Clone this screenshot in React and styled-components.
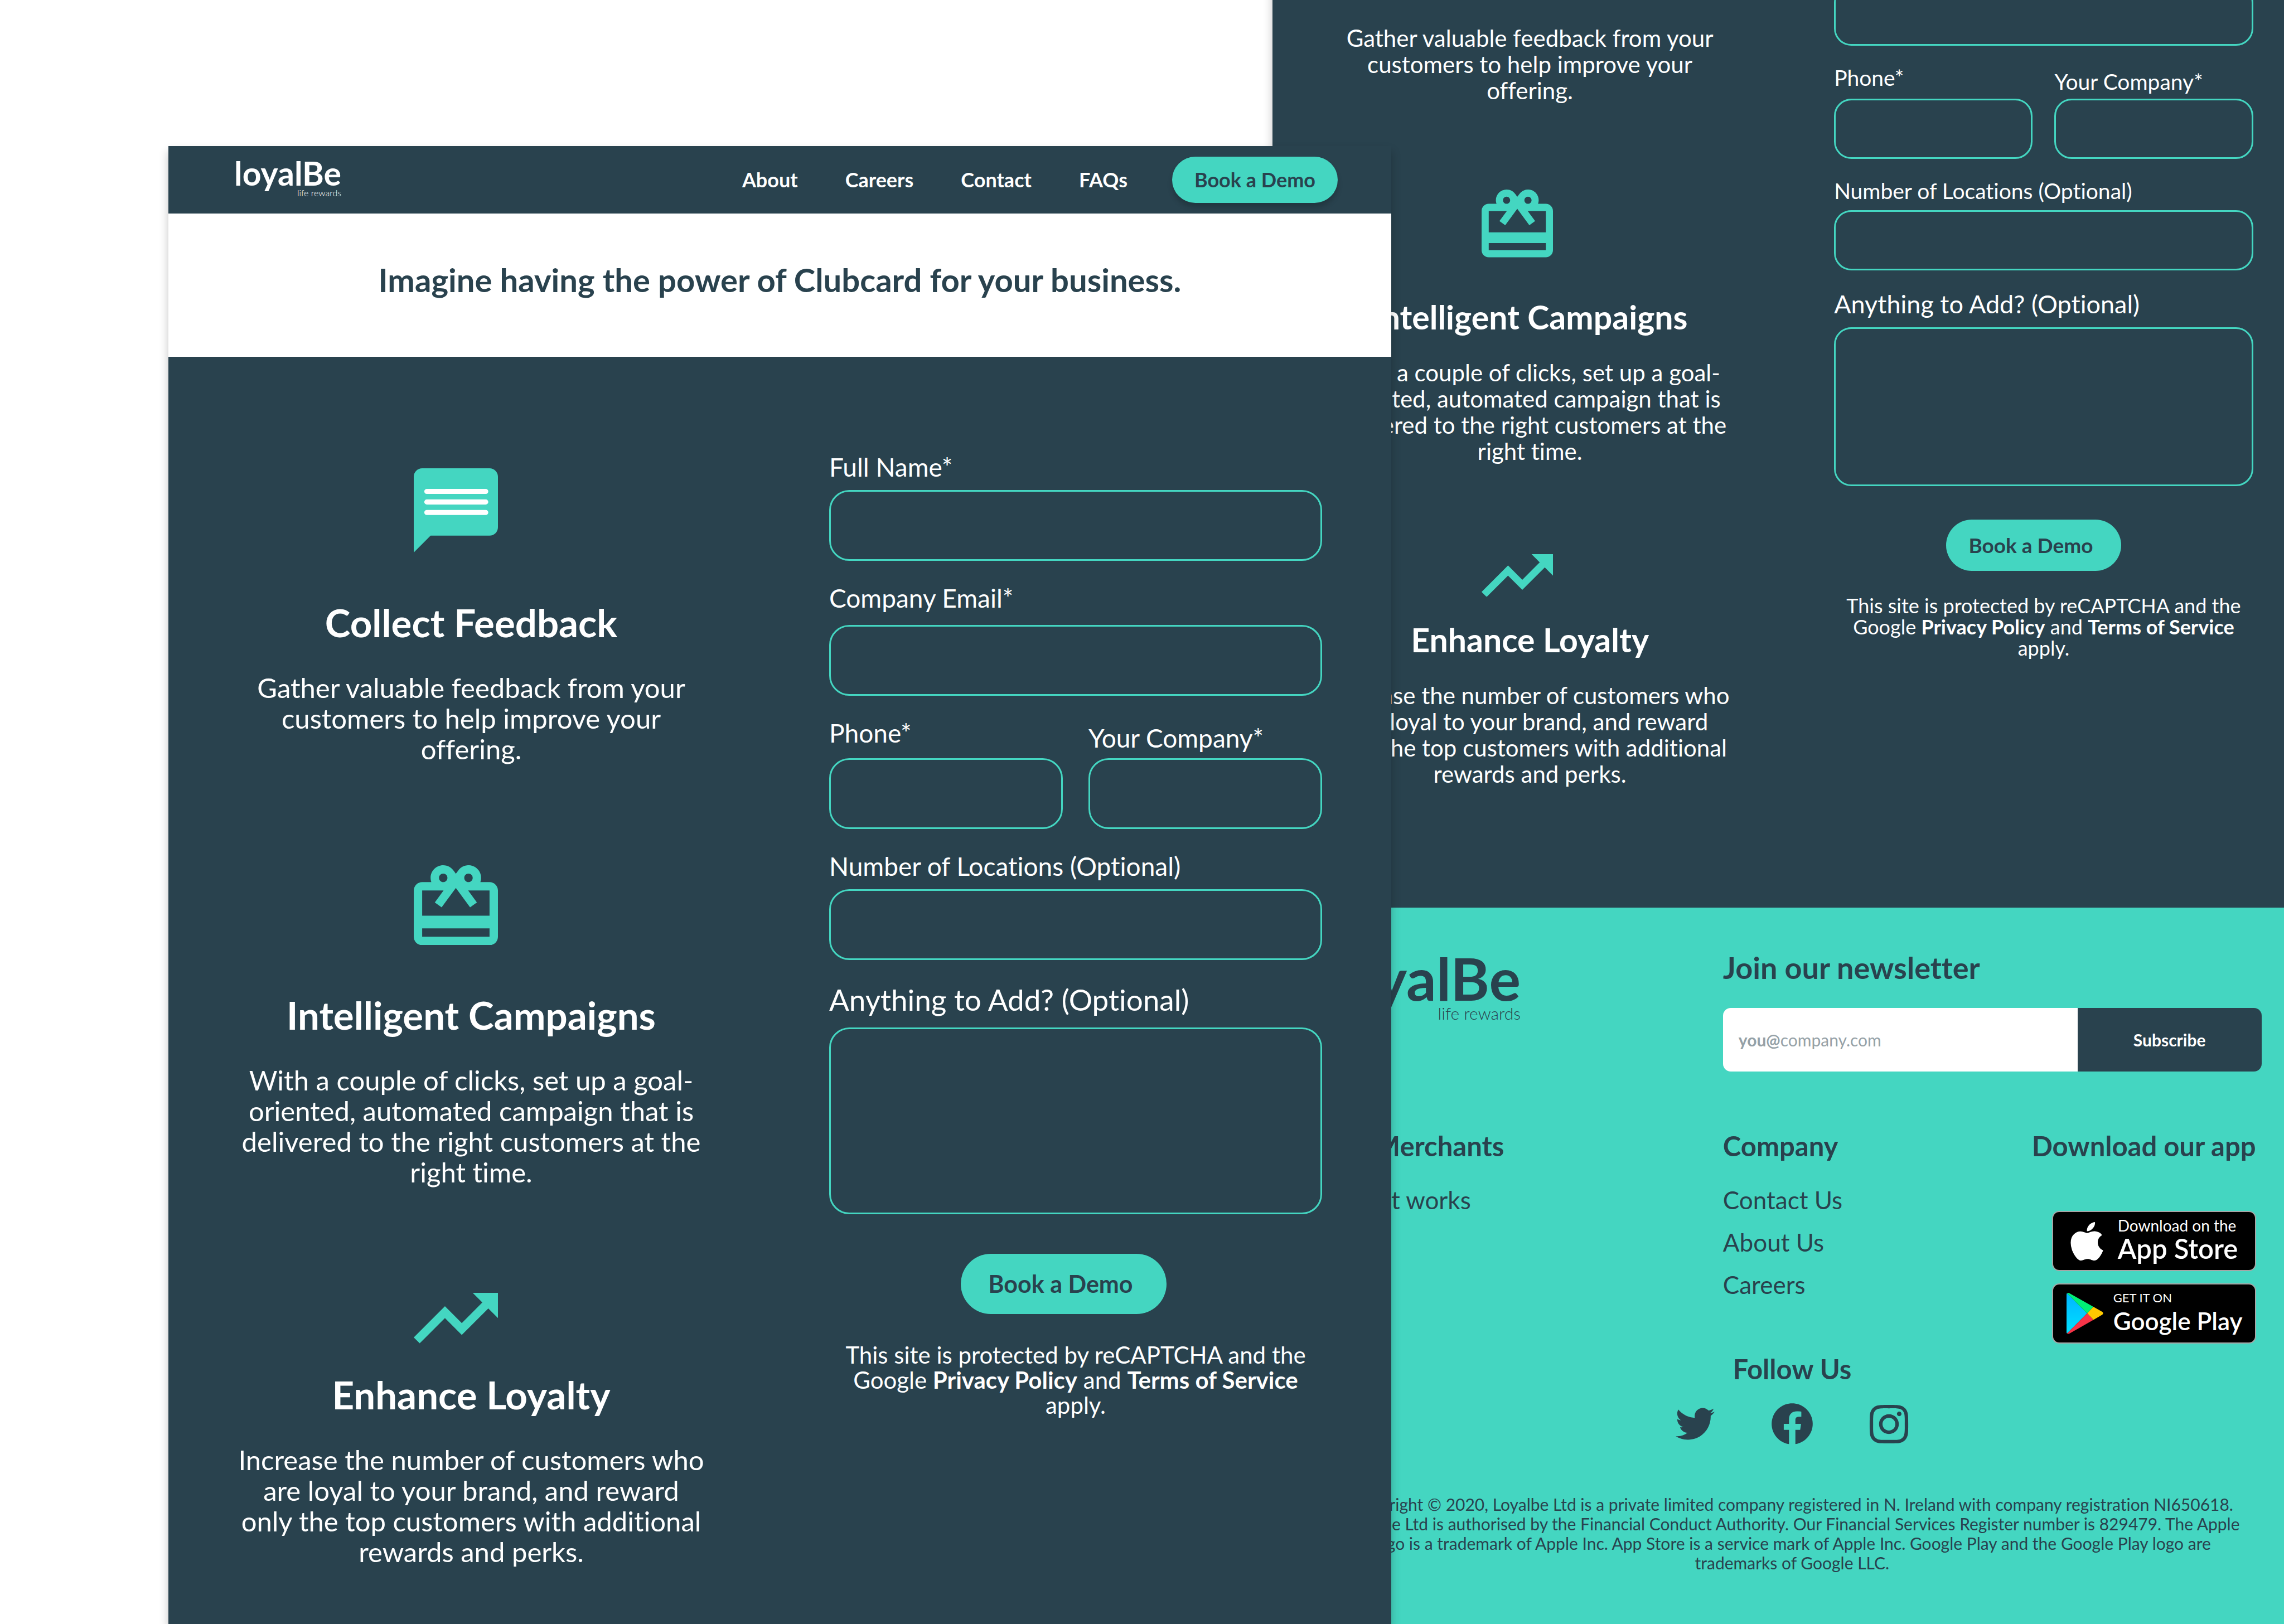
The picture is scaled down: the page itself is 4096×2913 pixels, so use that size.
import React from 'react';
import styled, { createGlobalStyle, css, ThemeProvider } from 'styled-components';
import { MdRedeem, MdTrendingUp } from 'react-icons/md';
import { FaApple, FaFacebook, FaInstagram, FaTwitter } from 'react-icons/fa';

const INK = '#29424e';
const MINT = '#44d6c1';

/* Sizes are given for the full-size screen and follow the theme's scale. */
const s = (n) => ({ theme }) => `${Math.round(n * theme.scale)}px`;

const GlobalStyle = createGlobalStyle`
  *, *::before, *::after { box-sizing: border-box; }
  body {
    margin: 0;
    background: #fff;
    font-family: Lato, "Open Sans", sans-serif;
    font-variant-ligatures: none;
  }
  h1, h2, h3, p, ul { margin: 0; padding: 0; font-weight: inherit; }
  ul { list-style: none; }
  a { color: inherit; text-decoration: none; }
  button, input, textarea { font-family: inherit; }
  svg { display: block; }
`;

const Desktop = styled.div`
  position: relative;
  height: 100vh;
  overflow: hidden;
  background: #fff;
`;

const screenBase = css`
  position: absolute;
  background: ${INK};
  overflow: hidden;
  box-shadow: 0 10px 16px rgba(0, 0, 0, 0.24);
`;

const FrontScreen = styled.article`
  ${screenBase}
  left: 302px;
  top: 262px;
  bottom: 0;
  width: 53.54%;
`;

const BackScreen = styled.article`
  ${screenBase}
  left: 2282px;
  top: -436px;
  bottom: 0;
  width: 45.5%;
`;

/* ---------- Logo ---------- */

const LogoMark = styled.div`
  display: inline-flex;
  flex-direction: column;
  align-items: flex-end;
  color: ${(p) => p.$color};
`;

const LogoWord = styled.span`
  font-size: ${(p) => (p.$large ? 106 : 59)}px;
  line-height: 1;
  font-weight: 700;
`;

const LogoTag = styled.span`
  margin-top: ${(p) => (p.$large ? -8 : -4)}px;
  font-size: ${(p) => (p.$large ? 30 : 16)}px;
  line-height: ${(p) => (p.$large ? 36 : 20)}px;
  font-weight: 300;
`;

function Logo({ large, color }) {
  return (
    <LogoMark $color={color}>
      <LogoWord $large={large}>loyalBe</LogoWord>
      <LogoTag $large={large}>life rewards</LogoTag>
    </LogoMark>
  );
}

/* ---------- Header ---------- */

const Header = styled.header`
  display: flex;
  justify-content: space-between;
  align-items: flex-start;
  height: 121px;
  padding: 19px 96px 0 118px;
`;

const HeaderRight = styled.div`
  display: flex;
  align-items: center;
  gap: 80px;
`;

const Nav = styled.nav`
  display: flex;
  gap: 85px;
  padding-bottom: 2px;
  font-size: 36px;
  line-height: 44px;
  font-weight: 700;
  color: #fff;
`;

const Pill = styled.button`
  border: 0;
  background: ${MINT};
  color: ${INK};
  font-weight: 700;
  border-radius: 999px;
`;

const HeaderPill = styled(Pill)`
  width: 297px;
  height: 83px;
  padding: 0 0 2px;
  font-size: 36px;
  box-shadow: 0 8px 10px rgba(0, 0, 0, 0.18);
`;

const Band = styled.section`
  padding: 84px 40px 103px;
  background: #fff;
  color: ${INK};
  text-align: center;
`;

const Headline = styled.h1`
  font-size: 58px;
  line-height: 70px;
  font-weight: 700;
`;

/* ---------- Body ---------- */

const Body = styled.section`
  display: grid;
  grid-template-columns: 846fr 884fr;
  column-gap: ${s(219)};
  align-items: start;
  min-height: ${s(2428)};
  padding: 0 ${s(124)} 0 ${s(120)};
  color: #fff;
`;

const Features = styled.div`
  padding-top: ${s(200)};
`;

const FeatureCard = styled.section`
  display: flex;
  flex-direction: column;
  align-items: center;
  text-align: center;
  margin-bottom: ${(p) => s(p.$after)};
`;

const FeatureIcon = styled.div`
  width: ${s(151)};
  margin: 0 ${s(54)} ${(p) => s(p.$gap)} 0;
  color: ${MINT};
  svg {
    width: 100%;
    height: auto;
    aspect-ratio: ${(p) => p.$ratio};
  }
`;

const FeatureTitle = styled.h2`
  margin-bottom: ${s(49)};
  font-size: ${s(69)};
  line-height: ${s(80)};
  font-weight: 700;
`;

const FeatureText = styled.p`
  font-size: ${s(49)};
  line-height: ${s(55)};
`;

const ChatIcon = () => (
  <svg viewBox="2 2 20 20" fill="currentColor" aria-hidden="true">
    <path d="M20 2H4c-1.1 0-2 .9-2 2v18l4-4h14c1.1 0 2-.9 2-2V4c0-1.1-.9-2-2-2z" />
    <path d="M5.1 7.5h14M5.1 10h14M5.1 12.5h14" stroke="#fff" strokeWidth="1.2" strokeLinecap="round" />
  </svg>
);

const FEATURES = [
  {
    icon: <ChatIcon />,
    ratio: '20 / 20',
    gap: 86,
    after: 181,
    title: 'Collect Feedback',
    text: 'Gather valuable feedback from your customers to help improve your offering.',
  },
  {
    icon: <MdRedeem viewBox="2 2 20 19" aria-hidden="true" />,
    ratio: '20 / 19',
    gap: 86,
    after: 189,
    title: 'Intelligent Campaigns',
    text: 'With a couple of clicks, set up a goal-oriented, automated campaign that is delivered to the right customers at the right time.',
  },
  {
    icon: <MdTrendingUp viewBox="2 6 20 12" aria-hidden="true" />,
    ratio: '20 / 12',
    gap: 52,
    after: 0,
    title: 'Enhance Loyalty',
    text: 'Increase the number of customers who are loyal to your brand, and reward only the top customers with additional rewards and perks.',
  },
];

/* ---------- Form ---------- */

const Form = styled.form`
  display: flex;
  flex-direction: column;
  gap: ${s(39)};
  padding-top: ${s(170)};
`;

const FieldPair = styled.div`
  display: grid;
  grid-template-columns: 1fr 1fr;
  gap: ${s(46)};
  align-items: end;
`;

const Field = styled.div`
  display: flex;
  flex-direction: column;
  gap: ${(p) => s(p.$gap)};
`;

const Label = styled.label`
  font-size: ${(p) => s(p.$large ? 53 : 46)};
  line-height: ${(p) => s(p.$large ? 64 : 56)};
`;

const control = css`
  width: 100%;
  margin: 0;
  padding: ${s(20)} ${s(32)};
  border: 3px solid ${MINT};
  border-radius: ${s(36)};
  background: transparent;
  color: #fff;
  font-size: ${s(46)};
  outline: none;
`;

const TextInput = styled.input`
  ${control}
  height: ${s(127)};
`;

const TextArea = styled.textarea`
  ${control}
  height: ${s(335)};
  resize: none;
`;

const SubmitPill = styled(Pill)`
  align-self: center;
  width: ${s(369)};
  height: ${s(108)};
  margin: ${s(32)} ${s(42)} ${s(12)} 0;
  padding: 0 ${s(12)} ${s(2)} 0;
  font-size: ${s(43)};
`;

const Legal = styled.p`
  text-align: center;
  font-size: ${s(42)};
  line-height: ${s(45)};
  a { font-weight: 700; }
`;

function InputField({ id, label, gap, type = 'text' }) {
  return (
    <Field $gap={gap}>
      <Label htmlFor={id}>{label}</Label>
      <TextInput id={id} type={type} />
    </Field>
  );
}

function DemoBody({ id }) {
  return (
    <Body>
      <Features>
        {FEATURES.map((f) => (
          <FeatureCard key={f.title} $after={f.after}>
            <FeatureIcon $ratio={f.ratio} $gap={f.gap}>{f.icon}</FeatureIcon>
            <FeatureTitle>{f.title}</FeatureTitle>
            <FeatureText>{f.text}</FeatureText>
          </FeatureCard>
        ))}
      </Features>
      <Form onSubmit={(e) => e.preventDefault()}>
        <InputField id={`${id}-name`} label="Full Name*" gap={13} />
        <InputField id={`${id}-email`} label="Company Email*" gap={20} type="email" />
        <FieldPair>
          <InputField id={`${id}-phone`} label="Phone*" gap={17} type="tel" />
          <InputField id={`${id}-company`} label="Your Company*" gap={8} />
        </FieldPair>
        <InputField id={`${id}-locations`} label="Number of Locations (Optional)" gap={13} />
        <Field $gap={18}>
          <Label $large htmlFor={`${id}-notes`}>Anything to Add? (Optional)</Label>
          <TextArea id={`${id}-notes`} />
        </Field>
        <SubmitPill type="submit">Book a Demo</SubmitPill>
        <Legal>
          This site is protected by reCAPTCHA and the Google <a href="#privacy">Privacy Policy</a> and{' '}
          <a href="#terms">Terms of Service</a> apply.
        </Legal>
      </Form>
    </Body>
  );
}

/* ---------- Footer ---------- */

const Footer = styled.footer`
  padding: 73px 0 100px;
  background: ${MINT};
  color: ${INK};
`;

const FooterGrid = styled.div`
  display: grid;
  grid-template-columns: 708fr 966fr;
  row-gap: 103px;
  padding: 0 90px 0 100px;
`;

const NewsTitle = styled.h2`
  margin-bottom: 37px;
  font-size: 54px;
  line-height: 70px;
  font-weight: 700;
`;

const NewsForm = styled.form`
  position: relative;
  display: flex;
  height: 114px;
  border-radius: 14px;
  overflow: hidden;
`;

const NewsInput = styled.input`
  flex: 1;
  min-width: 0;
  border: 0;
  padding: 0 28px;
  background: #fff;
  color: ${INK};
  font-size: 30px;
  outline: none;
`;

const NewsHint = styled.label`
  position: absolute;
  left: 28px;
  top: 0;
  font-size: 30px;
  line-height: 114px;
  color: #95a1a7;
  pointer-events: none;
`;

const NewsButton = styled.button`
  width: 330px;
  border: 0;
  background: ${INK};
  color: #fff;
  font-size: 30px;
  font-weight: 700;
`;

const FooterTitle = styled.h3`
  font-size: 49px;
  line-height: 60px;
  font-weight: 700;
`;

const LinkList = styled.ul`
  margin-top: 29px;
  font-size: 44px;
  line-height: 76px;
`;

const FooterSplit = styled.div`
  display: flex;
  justify-content: space-between;
`;

const AppColumn = styled.div`
  display: flex;
  flex-direction: column;
  align-items: flex-end;
  margin-right: 10px;
`;

const Badges = styled.div`
  display: grid;
  gap: 22px;
  margin-top: 87px;
`;

const Badge = styled.a`
  display: flex;
  width: 366px;
  height: 108px;
  padding-left: 6px;
  border: 2px solid #a6a6a6;
  border-radius: 13px;
  background: #000;
  color: #fff;
`;

const BadgeIcon = styled.span`
  display: flex;
  align-items: center;
  justify-content: center;
  width: ${(p) => p.$width}px;
`;

const BadgeText = styled.span`
  display: flex;
  flex-direction: column;
  gap: 2px;
  padding-top: 10px;
  font-weight: 600;
`;

const BadgeSmall = styled.span`
  font-size: ${(p) => p.$size}px;
  line-height: 28px;
  font-weight: 400;
`;

const BadgeLarge = styled.span`
  font-size: ${(p) => p.$size}px;
  line-height: 50px;
`;

const PlayIcon = () => (
  <svg width="66" height="74" viewBox="0 0 200 224" aria-hidden="true">
    <defs>
      <linearGradient id="play-blue" x1="0" y1="0" x2="0" y2="1">
        <stop offset="0" stopColor="#00b4ff" />
        <stop offset="1" stopColor="#00e1ff" />
      </linearGradient>
    </defs>
    <path fill="url(#play-blue)" d="M3 2 112 111 3 220Q0 218 0 214V8Q0 4 3 2Z" />
    <path fill="#00f076" d="M3 2Q8-2 16 2L146 76 112 111Z" />
    <path fill="#ffc900" d="M146 76l48 27q10 8 0 16l-48 28-34-36z" />
    <path fill="#f63448" d="M3 220 112 111l34 36L16 221q-8 4-13-1z" />
  </svg>
);

const Follow = styled.section`
  display: flex;
  flex-direction: column;
  align-items: center;
  gap: 32px;
  margin-top: 15px;
`;

const Socials = styled.div`
  display: flex;
  gap: 100px;
`;

const SocialLink = styled.a`
  display: flex;
  align-items: center;
  justify-content: center;
  width: 74px;
  height: 74px;
  svg { flex: none; }
`;

const Copyright = styled.p`
  max-width: 1640px;
  margin: 90px auto 0;
  text-align: center;
  font-size: 30px;
  line-height: 35px;
`;

function SiteFooter() {
  return (
    <Footer>
      <FooterGrid>
        <div>
          <Logo large color={INK} />
        </div>
        <div>
          <NewsTitle>Join our newsletter</NewsTitle>
          <NewsForm onSubmit={(e) => e.preventDefault()}>
            <NewsInput id="newsletter-email" type="email" />
            <NewsHint htmlFor="newsletter-email">
              <b>you@</b>company.com
            </NewsHint>
            <NewsButton type="submit">Subscribe</NewsButton>
          </NewsForm>
        </div>
        <div>
          <FooterTitle>For Merchants</FooterTitle>
          <LinkList>
            <li><a href="#how">How it works</a></li>
          </LinkList>
        </div>
        <FooterSplit>
          <div>
            <FooterTitle>Company</FooterTitle>
            <LinkList>
              <li><a href="#contact">Contact Us</a></li>
              <li><a href="#about">About Us</a></li>
              <li><a href="#careers">Careers</a></li>
            </LinkList>
          </div>
          <AppColumn>
            <FooterTitle>Download our app</FooterTitle>
            <Badges>
              <Badge href="#app-store">
                <BadgeIcon $width={110}><FaApple size={79} aria-hidden="true" /></BadgeIcon>
                <BadgeText>
                  <BadgeSmall $size={28}>Download on the</BadgeSmall>
                  <BadgeLarge $size={49}>App Store</BadgeLarge>
                </BadgeText>
              </Badge>
              <Badge href="#google-play">
                <BadgeIcon $width={102}><PlayIcon /></BadgeIcon>
                <BadgeText>
                  <BadgeSmall $size={22}>GET IT ON</BadgeSmall>
                  <BadgeLarge $size={44}>Google Play</BadgeLarge>
                </BadgeText>
              </Badge>
            </Badges>
          </AppColumn>
        </FooterSplit>
      </FooterGrid>
      <Follow>
        <FooterTitle>Follow Us</FooterTitle>
        <Socials>
          <SocialLink href="#twitter" aria-label="Twitter"><FaTwitter size={70} /></SocialLink>
          <SocialLink href="#facebook" aria-label="Facebook"><FaFacebook size={76} /></SocialLink>
          <SocialLink href="#instagram" aria-label="Instagram"><FaInstagram size={79} /></SocialLink>
        </Socials>
      </Follow>
      <Copyright>
        Copyright © 2020, Loyalbe Ltd is a private limited company registered in N. Ireland with company
        registration NI650618. Loyalbe Ltd is authorised by the Financial Conduct Authority. Our Financial
        Services Register number is 829479. The Apple logo is a trademark of Apple Inc. App Store is a
        service mark of Apple Inc. Google Play and the Google Play logo are trademarks of Google LLC.
      </Copyright>
    </Footer>
  );
}

export default function App() {
  return (
    <Desktop>
      <GlobalStyle />
      <ThemeProvider theme={{ scale: 0.85 }}>
        <BackScreen>
          <DemoBody id="back" />
          <SiteFooter />
        </BackScreen>
      </ThemeProvider>
      <ThemeProvider theme={{ scale: 1 }}>
        <FrontScreen>
          <Header>
            <Logo color="#fff" />
            <HeaderRight>
              <Nav>
                <a href="#about">About</a>
                <a href="#careers">Careers</a>
                <a href="#contact">Contact</a>
                <a href="#faqs">FAQs</a>
              </Nav>
              <HeaderPill type="button">Book a Demo</HeaderPill>
            </HeaderRight>
          </Header>
          <Band>
            <Headline>Imagine having the power of Clubcard for your business.</Headline>
          </Band>
          <DemoBody id="front" />
        </FrontScreen>
      </ThemeProvider>
    </Desktop>
  );
}
